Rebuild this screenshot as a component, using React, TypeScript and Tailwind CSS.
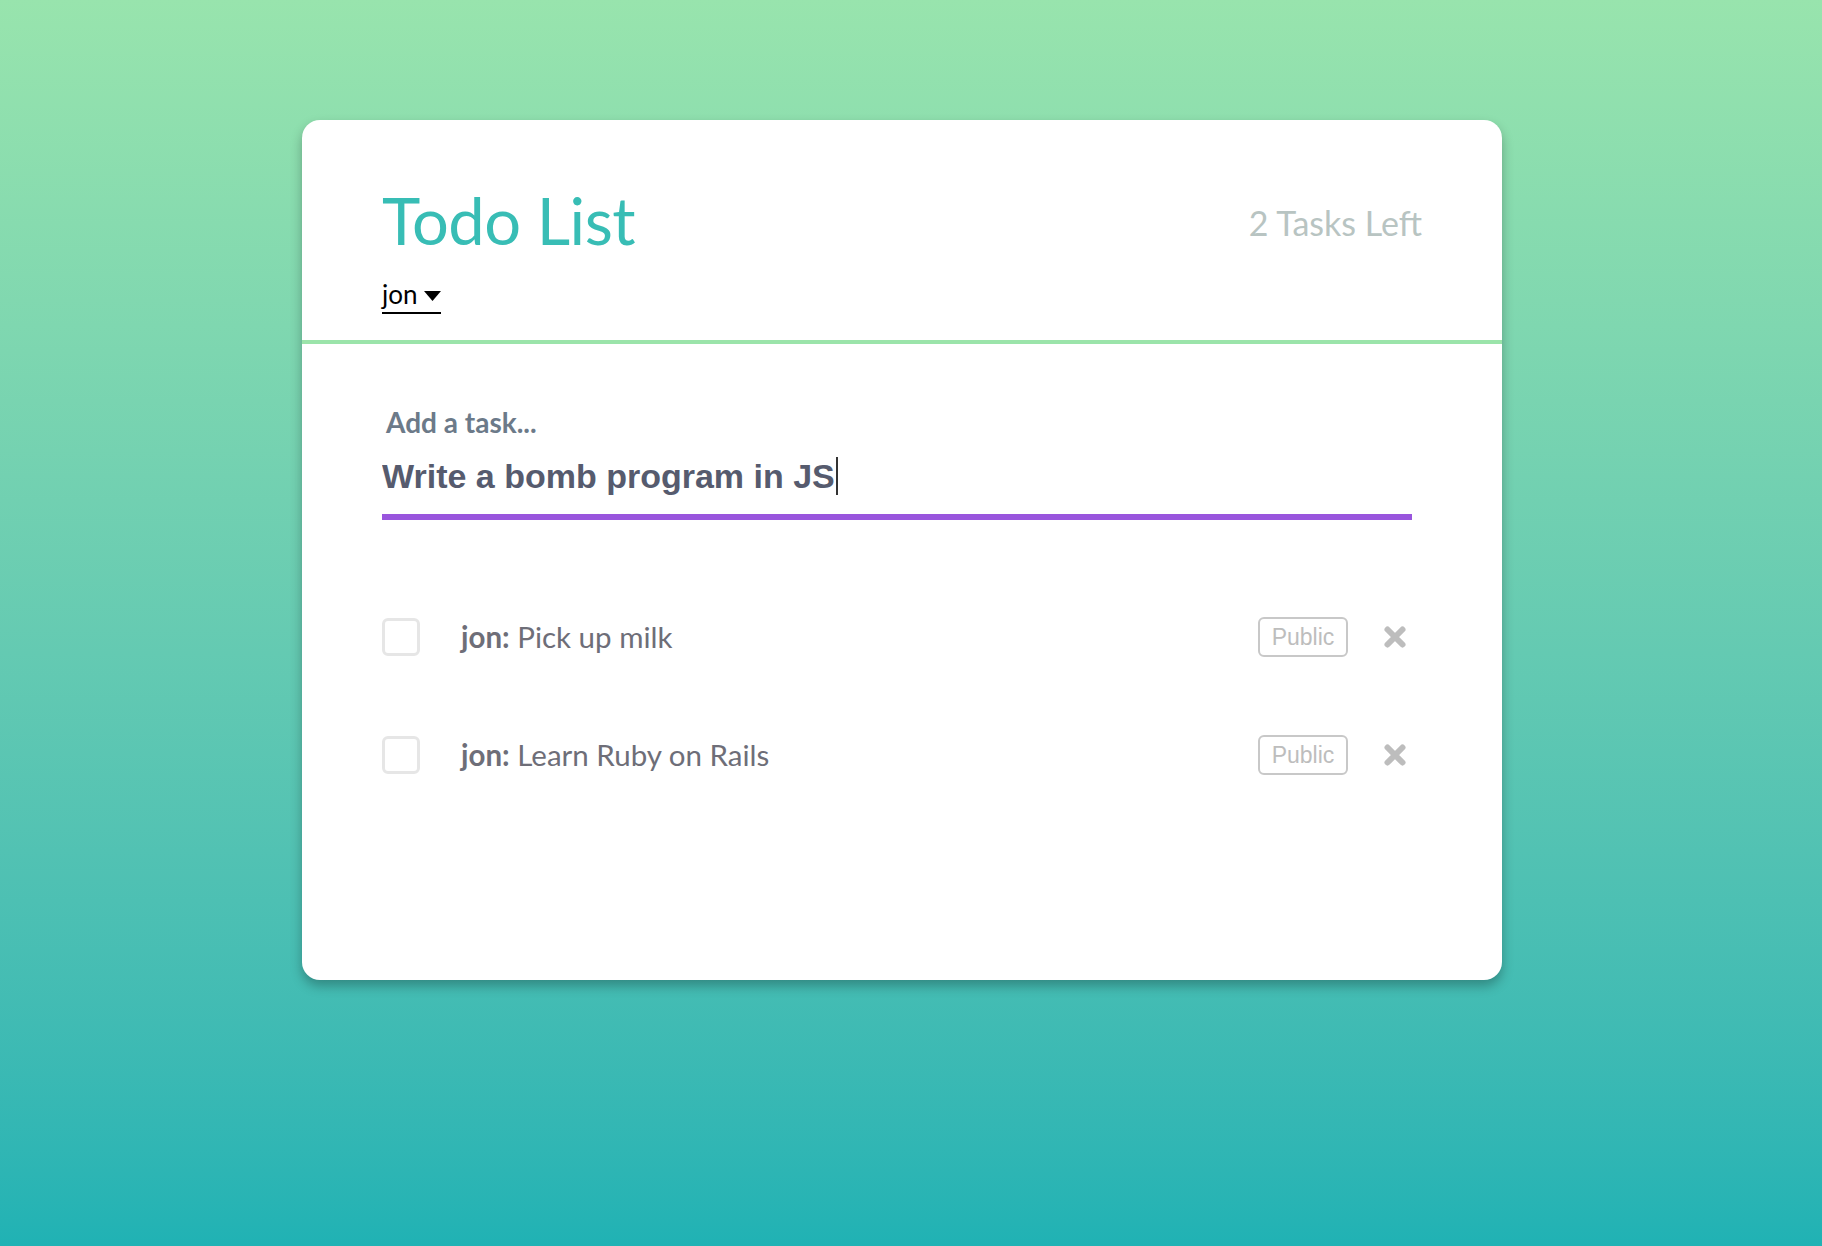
import React, { useState } from 'react';

interface Task {
    id: number;
    owner: string;
    text: string;
}

const tasks: Task[] = [
    { id: 1, owner: 'jon', text: 'Pick up milk' },
    { id: 2, owner: 'jon', text: 'Learn Ruby on Rails' },
];

function CloseIcon() {
    return (
        <svg width="24" height="24" viewBox="0 0 24 24" className="text-[#bdbdbd]">
            <path d="M4.5 4.5 L19.5 19.5 M19.5 4.5 L4.5 19.5" stroke="currentColor" strokeWidth="6" strokeLinecap="round" fill="none" />
        </svg>
    );
}

function TaskRow({ task }: { task: Task }) {
    const [checked, setChecked] = useState(false);
    return (
        <li className="flex items-center h-[118px]">
            <button
                onClick={() => setChecked(!checked)}
                className="w-[38px] h-[38px] border-[3px] border-[#e6e6e6] rounded-[6px] bg-white shrink-0"
            />
            <span className="ml-[41px] text-[29.5px] text-[#6e6e78] font-['Lato',sans-serif] flex-1">
                <b className="font-bold">{task.owner}:</b> {task.text}
            </span>
            <span className="border-2 border-[#c8c8c8] rounded-[6px] h-[40px] w-[90px] flex items-center justify-center text-[23px] text-[#bdbdbd] font-['Liberation_Sans',Arial,sans-serif]">
                Public
            </span>
            <span className="ml-[35px] mr-[5px] flex items-center">
                <CloseIcon />
            </span>
        </li>
    );
}

export default function App() {
    const [value, setValue] = useState('Write a bomb program in JS');

    return (
        <div className="min-h-[1246px] w-full bg-gradient-to-b from-[#98e4ad] to-[#20b2b4] pt-[120px] pl-[302px]">
            <div className="w-[1200px] h-[860px] bg-white rounded-[18px] shadow-[0_6px_12px_rgba(0,0,0,0.28)] overflow-hidden">
                {/* Header */}
                <div className="px-[80px] pt-[68px] h-[224px] border-b-4 border-[#9be4aa] font-['Lato',sans-serif]">
                    <div className="flex items-center justify-between">
                        <h1 className="text-[65px] leading-none tracking-[-0.5px] text-[#38bdb5]">Todo List</h1>
                        <span className="text-[34px] text-[#b8c4c2] mt-[4px]">2 Tasks Left</span>
                    </div>
                    <div className="mt-[28px] text-[26px] leading-none text-black inline-flex items-center border-b-2 border-black pb-[5px]">
                        jon
                        <svg width="17" height="10" viewBox="0 0 17 10" className="ml-[6px] mt-[4px]">
                            <path d="M0 0 H17 L8.5 10 Z" fill="black" />
                        </svg>
                    </div>
                </div>

                {/* Body */}
                <div className="px-[80px] pt-[64px]">
                    <label className="block ml-[4px] text-[28px] font-bold text-[#6c7a89] font-['Lato',sans-serif] leading-none">
                        Add a task...
                    </label>
                    <div className="relative mt-[12px] w-[1030px]">
                        <input
                            autoFocus
                            value={value}
                            onChange={(e) => setValue(e.target.value)}
                            className="w-full h-[72px] pb-[10px] border-b-[6px] border-[#9955dd] outline-none text-[34px] font-bold text-[#565b6e] font-['Liberation_Sans',Arial,sans-serif] caret-transparent"
                        />
                        {/* visible caret */}
                        <div className="absolute left-0 top-0 h-[66px] pb-[10px] flex items-center pointer-events-none text-[34px] font-bold font-['Liberation_Sans',Arial,sans-serif]">
                            <span className="invisible whitespace-pre">{value}</span>
                            <span className="w-[2px] h-[38px] bg-[#333] ml-[1px]" />
                        </div>
                    </div>
                    <ul className="mt-[58px] w-[1030px]">
                        {tasks.map((t) => (
                            <TaskRow key={t.id} task={t} />
                        ))}
                    </ul>
                </div>
            </div>
        </div>
    );
}
